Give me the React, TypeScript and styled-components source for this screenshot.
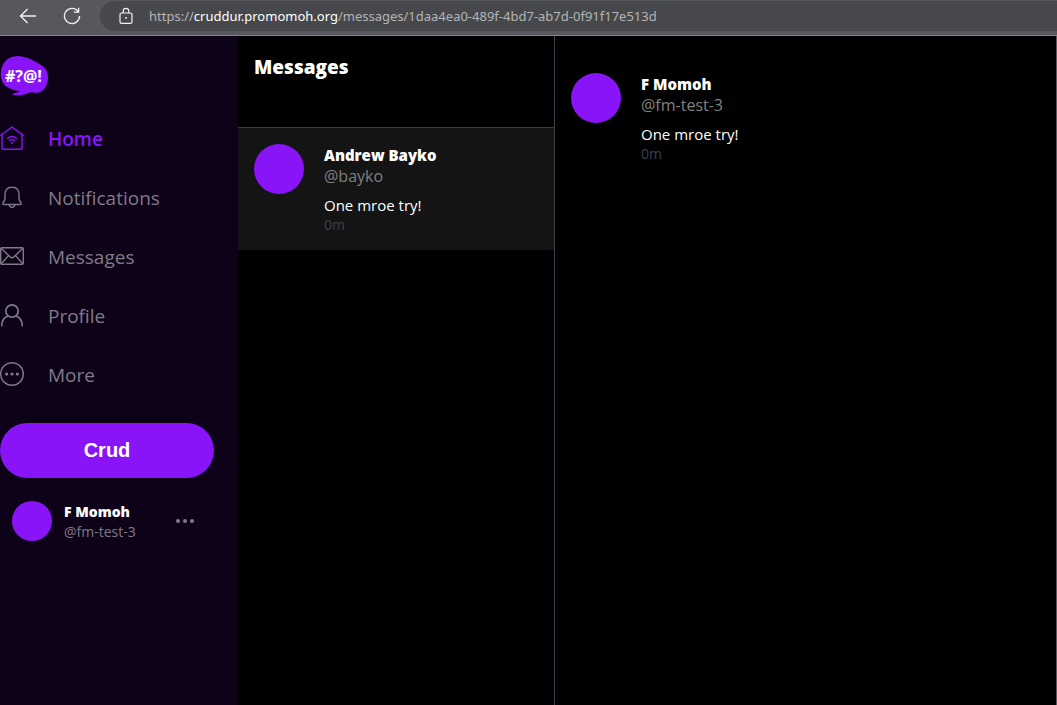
import React from 'react';
import styled, { createGlobalStyle } from 'styled-components';

const purple = '#8a14f8';
const muted = '#807b86';
const line = '#3b3e4b';
const uiFont = '"Segoe UI", "Open Sans", "Noto Sans", sans-serif';

const GlobalStyle = createGlobalStyle`
  *, *::before, *::after { box-sizing: border-box; }
  html, body, #root { height: 100%; }
  body { margin: 0; background: #000; color: #fff; font-family: ${uiFont}; }
  h1, p { margin: 0; }
  a { text-decoration: none; color: inherit; }
  button { border: 0; padding: 0; background: none; color: inherit; cursor: pointer; }
  svg { display: block; }
`;

const Page = styled.div`
  display: flex;
  flex-direction: column;
  min-height: 100%;
`;

const BrowserBar = styled.header`
  display: flex;
  height: 36px;
  padding: 1px 0 4px 16px;
  background: #57585d;
  border-bottom: 1px solid #85868a;
`;

const BarButton = styled.button`
  display: flex;
  align-items: center;
  width: 24px;
  margin-right: 20px;
  justify-content: center;
`;

const AddressBar = styled.div`
  flex: 1;
  display: flex;
  align-items: center;
  margin-left: -4px;
  padding-left: 17px;
  gap: 14px;
  border-radius: 15px 0 0 15px;
  background: #47484b;
`;

const Address = styled.div`
  color: #b4b4b5;
  font-family: "Noto Sans", sans-serif;
  font-size: 13px;
  line-height: 20px;
  white-space: nowrap;
  outline: none;
`;

const Host = styled.span`
  color: #fff;
`;

const Layout = styled.div`
  flex: 1;
  display: grid;
  grid-template-columns: 238px 317px 1fr;
`;

const Sidebar = styled.aside`
  display: flex;
  flex-direction: column;
  align-items: flex-start;
  padding-top: 20px;
  padding-right: 24px;
  background: #0d0218;
`;

const Logo = styled.a`
  margin-bottom: 13px;
`;

const Nav = styled.nav`
  display: flex;
  flex-direction: column;
  margin-bottom: 19px;
`;

const NavLink = styled.a<{ $active?: boolean }>`
  display: flex;
  align-items: flex-start;
  gap: 24px;
  height: 59px;
  padding-top: 17px;
  font-size: 19px;
  line-height: 27px;
  font-weight: ${p => (p.$active ? 600 : 400)};
  && { color: ${p => (p.$active ? purple : muted)}; }
`;

const CrudButton = styled.button`
  align-self: stretch;
  height: 55px;
  border-radius: 28px;
  && { background: ${purple}; color: #fff; }
  font: bold 20px "Liberation Sans", Arial, sans-serif;
`;

const ProfileRow = styled.div`
  align-self: stretch;
  display: flex;
  align-items: center;
  gap: 12px;
  margin-top: 23px;
  padding: 0 20px 0 12px;
`;

const Avatar = styled.div<{ $size: number }>`
  flex: none;
  width: ${p => p.$size}px;
  height: ${p => p.$size}px;
  border-radius: 50%;
  background: ${purple};
`;

const ProfileText = styled.div`
  flex: 1;
`;

const Name = styled.p<{ $small?: boolean }>`
  font-size: ${p => (p.$small ? 14 : 15)}px;
  line-height: ${p => (p.$small ? 21 : 23)}px;
  font-weight: 800;
`;

const Handle = styled.p<{ $small?: boolean }>`
  font-size: ${p => (p.$small ? 14 : 16)}px;
  line-height: 19px;
  color: ${p => (p.$small ? muted : '#808080')};
`;

const MessageList = styled.section`
  border-right: 1px solid ${line};
`;

const ListHeader = styled.div`
  height: 92px;
  padding: 16px;
  border-bottom: 1px solid ${line};
`;

const Title = styled.h1`
  font-size: 19px;
  line-height: 30px;
  font-weight: 800;
`;

const Conversation = styled.main`
  padding-top: 21px;
  border-right: 1px solid #57585d;
`;

const Card = styled.article<{ $selected?: boolean }>`
  display: flex;
  gap: 20px;
  padding: 16px 16px 17px;
  background: ${p => (p.$selected ? '#141414' : 'transparent')};
`;

const Body = styled.p`
  margin-top: 8px;
  font-size: 15px;
  line-height: 23px;
`;

const Time = styled.time`
  display: block;
  font-size: 14px;
  line-height: 16px;
  color: #3d404c;
`;

const Stroke = ({ children, size = 24, width = 1.4 }: { children: React.ReactNode; size?: number; width?: number }) => (
  <svg width={size} height={size} viewBox="0 0 24 24" fill="none" stroke="currentColor" strokeWidth={width} aria-hidden="true">
    {children}
  </svg>
);

const icons = {
  home: (
    <Stroke>
      <path d="M.4 9.6 12 1l11.6 8.6M2 8.6v13.6q0 1.1 1.1 1.1h17.8q1.1 0 1.1-1.1V8.6" />
      <path d="M7.2 12.8q4.8-4.4 9.6 0M9.1 14.9q2.9-2.6 5.8 0" />
      <circle cx="12" cy="17" r="1.1" fill="currentColor" stroke="none" />
    </Stroke>
  ),
  bell: (
    <Stroke>
      <path d="M12 2c-4.2 0-7 3-7 7v5c0 1.5-2.2 3-2.2 4.6 0 .7.4.9 1 .9h16.4c.6 0 1-.2 1-.9 0-1.6-2.2-3.1-2.2-4.6V9c0-4-2.8-7-7-7ZM9 19.5c.2 1.8 1.3 2.8 3 2.8s2.8-1 3-2.8" />
    </Stroke>
  ),
  mail: (
    <Stroke>
      <rect x=".7" y="3.7" width="22.6" height="16.6" rx="1.2" />
      <path d="m1.2 4.3 8.8 8.5q2 1.9 4 0l8.8-8.5M1.2 19.7l7.3-8.1M22.8 19.7l-7.3-8.1" />
    </Stroke>
  ),
  person: (
    <Stroke width={1.7}>
      <circle cx="12" cy="8" r="6.2" />
      <path d="M1.7 23.200c0-5.3 2.8-9.1 6.5-10.200M22.300 23.200c0-5.3-2.8-9.1-6.5-10.200" />
    </Stroke>
  ),
  more: (
    <Stroke>
      <circle cx="12" cy="12" r="11.3" />
      <g fill="currentColor" stroke="none">
        <circle cx="6.6" cy="12" r="1.6" />
        <circle cx="12" cy="12" r="1.6" />
        <circle cx="17.4" cy="12" r="1.6" />
      </g>
    </Stroke>
  ),
};

const links = [
  { label: 'Home', icon: icons.home, active: true },
  { label: 'Notifications', icon: icons.bell },
  { label: 'Messages', icon: icons.mail },
  { label: 'Profile', icon: icons.person },
  { label: 'More', icon: icons.more },
];

const Message = ({ name, handle, selected }: { name: string; handle: string; selected?: boolean }) => (
  <Card $selected={selected}>
    <Avatar $size={50} />
    <div>
      <Name>{name}</Name>
      <Handle>{handle}</Handle>
      <Body>One mroe try!</Body>
      <Time>0m</Time>
    </div>
  </Card>
);

export default function App() {
  return (
    <Page>
      <GlobalStyle />
      <BrowserBar>
        <BarButton aria-label="Back">
          <svg width="18" height="16" viewBox="0 0 18 16" fill="none" stroke="#f2f2f2" strokeWidth="1.3">
            <path d="M17 8H1.5M8.5 1l-7 7 7 7" />
          </svg>
        </BarButton>
        <BarButton aria-label="Refresh">
          <svg width="18" height="18" viewBox="0 0 18 18" fill="none" stroke="#f2f2f2" strokeWidth="1.3">
            <path d="M15.3 4.7A7.6 7.6 0 1 0 16.6 9M15.6.8v4.4h-4.7" />
          </svg>
        </BarButton>
        <AddressBar>
          <svg width="18" height="18" viewBox="0 0 18 18" fill="none" stroke="#f2f2f2" strokeWidth="1.2">
            <rect x="3" y="6" width="12" height="10.4" rx="1.6" />
            <path d="M6.2 6V4.2a2.8 2.8 0 0 1 5.6 0V6" />
            <circle cx="9" cy="11" r="1" fill="#f2f2f2" stroke="none" />
          </svg>
          <Address role="textbox" aria-label="Address" contentEditable suppressContentEditableWarning>
            https://<Host>cruddur.promomoh.org</Host>/messages/1daa4ea0-489f-4bd7-ab7d-0f91f17e513d
          </Address>
        </AddressBar>
      </BrowserBar>
      <Layout>
        <Sidebar>
          <Logo href="#" aria-label="Cruddur">
            <svg width="48" height="40" viewBox="0 0 48 40">
              <path
                fill={purple}
                d="M17 0C7 0 .7 8.5.7 18.5c0 9.5 7 15.500 19.300 16.500-2 1.600-4.500 2-8.300 2.900 2.600 1.800 12 2 18.300-1.600 4.500.5 9 .8 12.200-1.400C46.500 31.500 48 26 48 21.500c0-7-3.500-10.500-8.500-13.500C33.500 4.200 25 0 17 0Z"
              />
              <text x="5" y="26" fill="#fff" fontFamily={uiFont} fontSize="16" fontWeight="700">#?@!</text>
            </svg>
          </Logo>
          <Nav>
            {links.map(l => (
              <NavLink key={l.label} href="#" $active={l.active}>
                {l.icon}
                {l.label}
              </NavLink>
            ))}
          </Nav>
          <CrudButton>Crud</CrudButton>
          <ProfileRow>
            <Avatar $size={40} />
            <ProfileText>
              <Name $small>F Momoh</Name>
              <Handle $small>@fm-test-3</Handle>
            </ProfileText>
            <button aria-label="Account menu">
              <svg width="18" height="4" viewBox="0 0 18 4" fill={muted}>
                <circle cx="2" cy="2" r="2" />
                <circle cx="9" cy="2" r="2" />
                <circle cx="16" cy="2" r="2" />
              </svg>
            </button>
          </ProfileRow>
        </Sidebar>
        <MessageList>
          <ListHeader>
            <Title>Messages</Title>
          </ListHeader>
          <Message name="Andrew Bayko" handle="@bayko" selected />
        </MessageList>
        <Conversation>
          <Message name="F Momoh" handle="@fm-test-3" />
        </Conversation>
      </Layout>
    </Page>
  );
}
